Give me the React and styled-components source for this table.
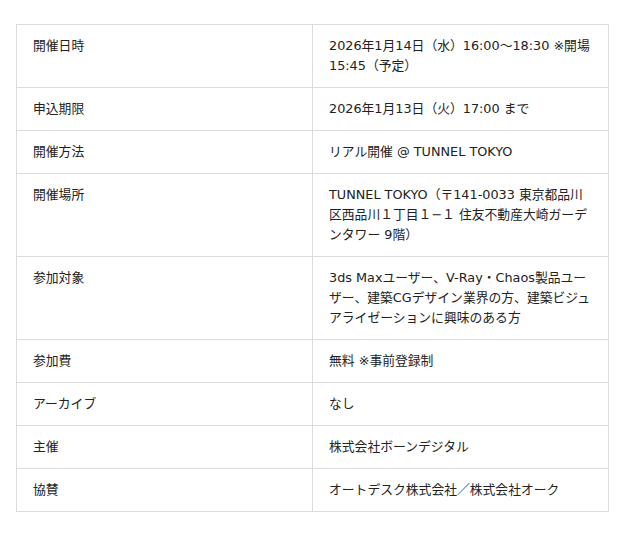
import React from "react";
import styled, { createGlobalStyle } from "styled-components";

const GlobalStyle = createGlobalStyle`
  html, body {
    margin: 0;
    padding: 0;
    background: #fff;
  }
  body {
    font-family: "DejaVu Sans", "Noto Sans CJK JP", sans-serif;
    color: #222;
  }
`;

const Page = styled.div`
  padding: 24px 31px 24px 16px;
`;

const Table = styled.table`
  width: 100%;
  border-collapse: collapse;
  table-layout: fixed;
  font-size: 12.8px;
  line-height: 20px;
`;

const Row = styled.tr`
  border: 1px solid #dcdcdc;
`;

const Cell = styled.td`
  width: 50%;
  vertical-align: top;
  padding: 11px 16px;
  border: 1px solid #dcdcdc;
  word-break: break-all;
  line-break: strict;
`;

const rows = [
  ["開催日時", "2026年1月14日（水）16:00〜18:30 ※開場15:45（予定）"],
  ["申込期限", "2026年1月13日（火）17:00 まで"],
  ["開催方法", "リアル開催 @ TUNNEL TOKYO"],
  ["開催場所", "TUNNEL TOKYO（〒141-0033 東京都品川区西品川１丁目１−１ 住友不動産大崎ガーデンタワー 9階）"],
  ["参加対象", "3ds Maxユーザー、V-Ray・Chaos製品ユーザー、建築CGデザイン業界の方、建築ビジュアライゼーションに興味のある方"],
  ["参加費", "無料 ※事前登録制"],
  ["アーカイブ", "なし"],
  ["主催", "株式会社ボーンデジタル"],
  ["協賛", "オートデスク株式会社／株式会社オーク"],
];

export default function App() {
  return (
    <>
      <GlobalStyle />
      <Page>
        <Table>
          <tbody>
            {rows.map(([label, value]) => (
              <Row key={label}>
                <Cell>{label}</Cell>
                <Cell>{value}</Cell>
              </Row>
            ))}
          </tbody>
        </Table>
      </Page>
    </>
  );
}
